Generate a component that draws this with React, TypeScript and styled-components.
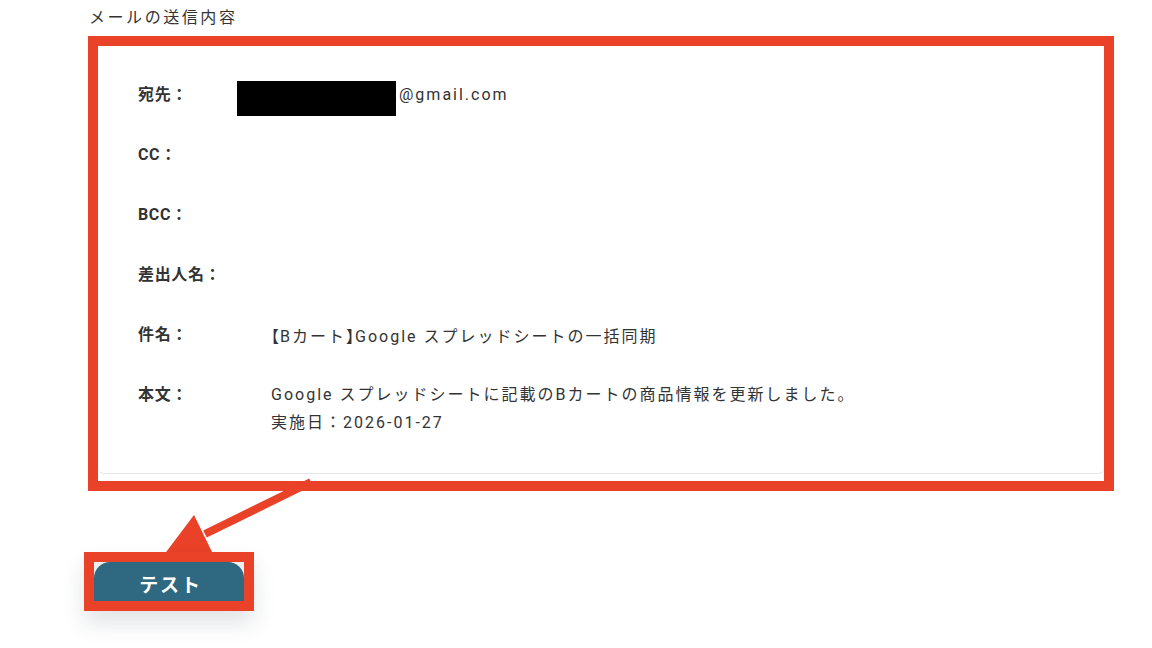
import React from 'react';
import styled, { createGlobalStyle } from 'styled-components';

const GlobalStyle = createGlobalStyle`
  html, body {
    margin: 0;
    padding: 0;
    background: #ffffff;
  }
  body {
    font-family: "Noto Sans CJK JP", "Noto Sans", sans-serif;
    color: #333333;
  }
`;

const Page = styled.div`
  position: relative;
  width: 1152px;
  height: 648px;
  padding-left: 88px;
  box-sizing: border-box;
  overflow: hidden;
`;

const Title = styled.h2`
  margin: 4px 0 8px 1px;
  font-size: 16px;
  line-height: 24px;
  font-weight: 400;
  letter-spacing: 0.16em;
  color: #333333;
`;

const Highlight = styled.div`
  width: 1026px;
  height: 455px;
  box-sizing: border-box;
  border: 10px solid #ea4129;
  background: #ffffff;
`;

const Card = styled.div`
  height: 428px;
  box-sizing: border-box;
  padding: 19px 40px 0;
  background: #ffffff;
  border-bottom: 1px solid #e6e6e6;
  border-radius: 0 0 6px 6px;
`;

const Row = styled.div`
  display: flex;
  align-items: flex-start;
  min-height: 60px;
  padding-top: 16px;
  box-sizing: border-box;
`;

const Label = styled.div`
  width: 99px;
  flex-shrink: 0;
  font-family: "Roboto", "Noto Sans CJK JP", sans-serif;
  font-size: 16px;
  line-height: 28px;
  font-weight: 700;
  letter-spacing: 0.04em;
  color: #333333;
`;

const Value = styled.div<{ $indent?: number }>`
  display: flex;
  align-items: flex-start;
  margin-left: ${(p) => p.$indent ?? 0}px;
  font-family: "Roboto", "Noto Sans CJK JP", sans-serif;
  font-size: 16px;
  line-height: 28px;
  letter-spacing: 2px;
  color: #333333;
  white-space: pre-line;
`;

const Bracket = styled.span`
  font-family: "Noto Sans CJK JP", sans-serif;
  font-feature-settings: "halt";
  letter-spacing: 1px;
`;

const Redacted = styled.span`
  display: block;
  width: 159px;
  height: 35px;
  margin-right: 3px;
  background: #000000;
`;

const Arrow = styled.svg`
  position: absolute;
  left: 0;
  top: 0;
  z-index: 1;
  pointer-events: none;
`;

const ButtonHighlight = styled.div`
  position: relative;
  z-index: 2;
  width: 170px;
  height: 59px;
  margin: 61px 0 0 -4px;
  box-sizing: border-box;
  border: 10px solid #ea4129;
  background: #eceff1;
  overflow: hidden;
  box-shadow: 0 12px 22px rgba(40, 60, 70, 0.14);
`;

const TestButton = styled.button`
  display: block;
  width: 100%;
  height: 100%;
  border: none;
  border-radius: 16px 16px 0 0;
  background: #2e6881;
  color: #ffffff;
  font-family: "Noto Sans CJK JP", "Noto Sans", sans-serif;
  font-size: 19px;
  font-weight: 700;
  letter-spacing: 0.1em;
  line-height: 39px;
  padding: 2px 0 0 3px;
  cursor: pointer;
`;

interface Field {
  label: string;
  value?: React.ReactNode;
  redacted?: boolean;
  indent?: number;
}

const fields: Field[] = [
  { label: '宛先：', value: '@gmail.com', redacted: true },
  { label: 'CC：' },
  { label: 'BCC：' },
  { label: '差出人名：' },
  {
    label: '件名：',
    value: (
      <span>
        <Bracket>【</Bracket>Bカート<Bracket>】</Bracket>Google スプレッドシートの一括同期
      </span>
    ),
    indent: 34,
  },
  {
    label: '本文：',
    value: 'Google スプレッドシートに記載のBカートの商品情報を更新しました。\n実施日：2026-01-27',
    indent: 34,
  },
];

const App: React.FC = () => {
  return (
    <>
      <GlobalStyle />
      <Page>
        <Title>メールの送信内容</Title>
        <Highlight>
          <Card>
            {fields.map((f, i) => (
              <Row key={i}>
                <Label>{f.label}</Label>
                <Value $indent={f.indent}>
                  {f.redacted && <Redacted />}
                  {f.value}
                </Value>
              </Row>
            ))}
          </Card>
        </Highlight>
        <Arrow width="1152" height="648" viewBox="0 0 1152 648">
          <line x1="311" y1="482" x2="205" y2="534" stroke="#ea4129" strokeWidth="8" />
          <polygon points="194,515 232,593 148,576" fill="#ea4129" />
        </Arrow>
        <ButtonHighlight>
          <TestButton>テスト</TestButton>
        </ButtonHighlight>
      </Page>
    </>
  );
};

export default App;
